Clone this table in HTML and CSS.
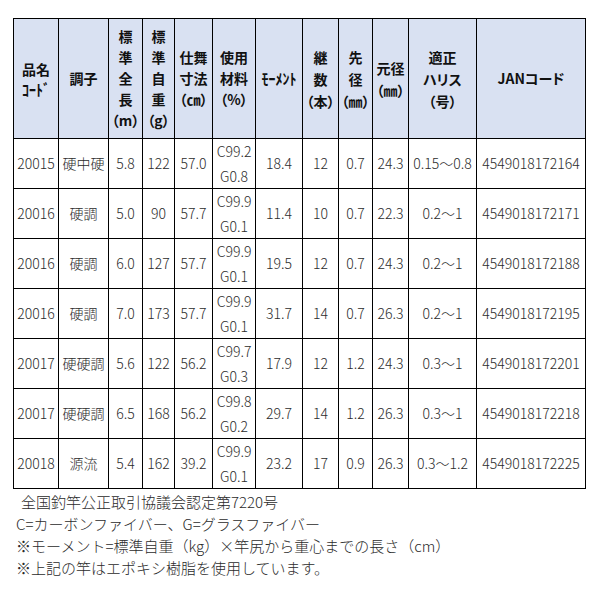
FILE: index.html
```html
<!DOCTYPE html>
<html lang="ja">
<head>
<meta charset="utf-8">
<link rel="stylesheet" href="styles.css">
</head>
<body>
<div class="page">
<table class="spec">
<colgroup>
<col class="c1"><col class="c2"><col class="c3"><col class="c4"><col class="c5"><col class="c6"><col class="c7"><col class="c8"><col class="c9"><col class="c10"><col class="c11"><col class="c12">
</colgroup>
<thead>
<tr>
<th class="tight">品名<br><span class="hw">ｺｰﾄﾞ</span></th>
<th>調子</th>
<th>標<br>準<br>全<br>長<br>（m）</th>
<th>標<br>準<br>自<br>重<br>（g）</th>
<th>仕舞<br>寸法<br>（㎝）</th>
<th>使用<br>材料<br>（%）</th>
<th><span class="hw">ﾓｰﾒﾝﾄ</span></th>
<th class="wide">継<br>数<br>（本）</th>
<th class="wide">先<br>径<br>（㎜）</th>
<th class="wide">元径<br>（㎜）</th>
<th class="wide">適正<br>ハリス<br>（号）</th>
<th>JANコード</th>
</tr>
</thead>
<tbody>
<tr><td>20015</td><td>硬中硬</td><td>5.8</td><td>122</td><td>57.0</td><td>C99.2<br>G0.8</td><td>18.4</td><td>12</td><td>0.7</td><td>24.3</td><td>0.15〜0.8</td><td>4549018172164</td></tr>
<tr><td>20016</td><td>硬調</td><td>5.0</td><td>90</td><td>57.7</td><td>C99.9<br>G0.1</td><td>11.4</td><td>10</td><td>0.7</td><td>22.3</td><td>0.2〜1</td><td>4549018172171</td></tr>
<tr><td>20016</td><td>硬調</td><td>6.0</td><td>127</td><td>57.7</td><td>C99.9<br>G0.1</td><td>19.5</td><td>12</td><td>0.7</td><td>24.3</td><td>0.2〜1</td><td>4549018172188</td></tr>
<tr><td>20016</td><td>硬調</td><td>7.0</td><td>173</td><td>57.7</td><td>C99.9<br>G0.1</td><td>31.7</td><td>14</td><td>0.7</td><td>26.3</td><td>0.2〜1</td><td>4549018172195</td></tr>
<tr><td>20017</td><td>硬硬調</td><td>5.6</td><td>122</td><td>56.2</td><td>C99.7<br>G0.3</td><td>17.9</td><td>12</td><td>1.2</td><td>24.3</td><td>0.3〜1</td><td>4549018172201</td></tr>
<tr><td>20017</td><td>硬硬調</td><td>6.5</td><td>168</td><td>56.2</td><td>C99.8<br>G0.2</td><td>29.7</td><td>14</td><td>1.2</td><td>26.3</td><td>0.3〜1</td><td>4549018172218</td></tr>
<tr><td>20018</td><td>源流</td><td>5.4</td><td>162</td><td>39.2</td><td>C99.9<br>G0.1</td><td>23.2</td><td>17</td><td>0.9</td><td>26.3</td><td>0.3〜1.2</td><td>4549018172225</td></tr>
</tbody>
</table>
<div class="notes">
<p class="first">全国釣竿公正取引協議会認定第7220号</p>
<p>C=カーボンファイバー、G=グラスファイバー</p>
<p>※モーメント=標準自重（kg）×竿尻から重心までの長さ（cm）</p>
<p>※上記の竿はエポキシ樹脂を使用しています。</p>
</div>
</div>
</body>
</html>
```
FILE: styles.css
```css
html, body {
  margin: 0;
  padding: 0;
  background: #ffffff;
}
.page {
  padding: 18px 0 0 13px;
  font-family: "Noto Sans CJK JP", "Noto Sans", sans-serif;
  color: #2b2b2b;
}
.spec {
  border-collapse: collapse;
  table-layout: fixed;
  width: 573px;
}
.c1 { width: 45px; }
.c2 { width: 50px; }
.c3 { width: 34px; }
.c4 { width: 32px; }
.c5 { width: 38px; }
.c6 { width: 43px; }
.c7 { width: 47px; }
.c8 { width: 36px; }
.c9 { width: 34px; }
.c10 { width: 36px; }
.c11 { width: 68px; }
.c12 { width: 109px; }
.spec th, .spec td {
  border: 1px solid #000;
  padding: 0;
  text-align: center;
  vertical-align: middle;
  white-space: nowrap;
}
.spec th {
  height: 119px;
  background: #d9e1f2;
  font-size: 14px;
  font-weight: 700;
  line-height: 21px;
  color: #111;
  font-feature-settings: "palt";
}
.spec th.tight { line-height: 20px; }
.spec th.wide { line-height: 22px; }
.hw {
  display: inline-block;
  transform: scaleY(1.1);
}
.spec td {
  height: 49px;
  font-size: 14px;
  font-weight: 300;
  line-height: 24.5px;
}
.notes {
  margin-top: 2px;
  font-size: 15px;
  font-weight: 300;
  line-height: 22px;
}
.notes p {
  margin: 0 0 0 3px;
}
.notes p.first {
  margin-left: 8px;
}
```
